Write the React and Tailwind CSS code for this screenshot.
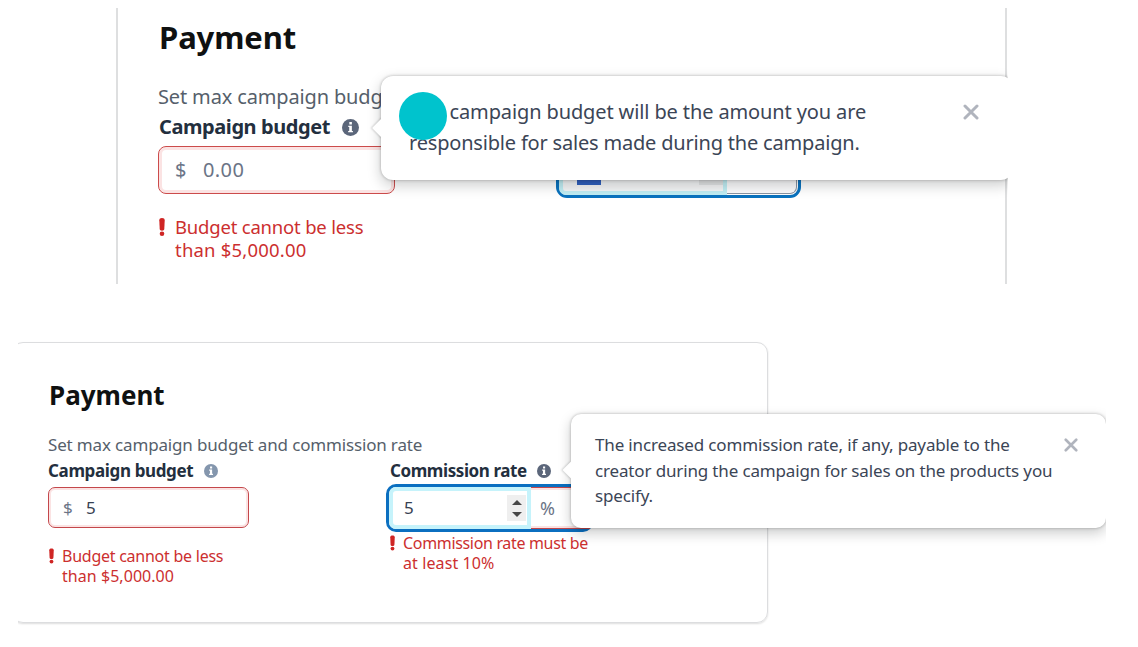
import React from 'react';

const InfoIcon = ({ className }) => (
    <svg viewBox="0 0 16 16" className={className}>
        <circle cx="8" cy="8" r="8" fill="currentColor" />
        <path d="M6.9 2.900h2.400v2.200H6.900zM5.900 6.300h3.400v4.900h1v1.300H5.800v-1.300h1V7.600h-.9z" fill="#fff" />
    </svg>
);

const AlertMark = ({ className }) => (
    <svg viewBox="0 0 6 18" className={className}>
        <path d="M.3 2.200C.3.800 1.300 0 3 0s2.700.8 2.700 2.200L5.300 11c-.1 1.100-1 1.700-2.300 1.700S.8 12.100.7 11z" fill="#cf2524" />
        <circle cx="3" cy="15.700" r="2.300" fill="#cf2524" />
    </svg>
);

const CloseIcon = ({ className }) => (
    <svg viewBox="0 0 16 16" className={className}>
        <path d="M2 2l12 12M14 2L2 14" stroke="#b0b4bd" strokeWidth="3" strokeLinecap="round" />
    </svg>
);

// Native number input style up/down arrows
const Stepper = () => (
    <div className="flex h-[26px] w-[19px] flex-col items-center justify-center gap-[7px] bg-[#efefef]">
        <svg viewBox="0 0 10 5" className="h-[5px] w-[10px]"><path d="M0 5L5 0l5 5z" fill="#484848" /></svg>
        <svg viewBox="0 0 10 5" className="h-[5px] w-[10px]"><path d="M0 0l5 5 5-5z" fill="#484848" /></svg>
    </div>
);

const BudgetPanel = () => (
    <section className="relative ml-[116px] h-[276px] w-[892px] overflow-hidden">
        <div className="h-full w-[891px] border-x-2 border-[#dedfe0] pt-[9px] pl-[40px]">
            <h2 className="pl-px text-[31px] leading-[40px] font-bold tracking-[-0.1px] text-[#0f1111]">Payment</h2>
            <p className="mt-[25px] text-[20px] leading-[30px] tracking-[-0.15px] text-[#565f6b]">Set max campaign budget and</p>
            <div className="flex items-center">
                <span className="pl-px text-[20px] leading-[30px] font-bold tracking-[-0.42px] text-[#232f3e]">Campaign budget</span>
                <InfoIcon className="ml-[12px] h-[17px] w-[17px] text-[#5b667a]" />
            </div>
            <div className="mt-[4px] flex items-start">
                <div className="flex h-12 w-[237px] items-center rounded-[8px] border border-[#cc4b4b] pl-4 text-[20px] tracking-[0.4px] text-[#6b7486] shadow-[inset_0_0_0_3px_#fbe3e3]">
                    <span className="w-[28px]">$</span>
                    <span>0.00</span>
                </div>
                <div className="mt-[-4px] ml-[161px] flex h-[56px] w-[245px] rounded-[11px] border-3 border-[#0972be]">
                    <div className="flex w-[168px] items-end rounded-l-[7px] border-4 border-[#c0edf3] bg-[#f4f5f6] pb-[6px] pl-[14px]">
                        <div className="h-[24px] w-[24px] bg-[#2f5fbe]" />
                        <div className="ml-auto h-[24px] w-[24px] bg-[#e2e3e4]" />
                    </div>
                    <div className="mr-px mb-px flex-1 rounded-r-[7px] border border-l-0 border-[#8a94a3] bg-[#fbfbfc]" />
                </div>
            </div>
            <div className="mt-[17px] flex text-[18.5px] leading-[23px] tracking-[-0.2px] text-[#cc2f2f]">
                <AlertMark className="mt-[3px] mr-[10px] ml-px h-[18px] w-[6px]" />
                <p>Budget cannot be less<br /><span className="tracking-[0.2px]">than $5,000.00</span></p>
            </div>
        </div>

        <div className="absolute top-[68px] left-[265px] flex h-[104px] w-[632px] items-start rounded-[12px] bg-white pt-[21px] pl-[28px] shadow-[0_0_3px_rgba(15,17,17,0.3),0_5px_14px_rgba(15,17,17,0.22)]">
            <div className="absolute top-[45px] left-[-6px] h-[14px] w-[14px] rotate-45 bg-white shadow-[-1px_1px_2px_rgba(15,17,17,0.16)]" />
            <div className="absolute top-[38px] left-0 h-[26px] w-[16px] bg-white" />
            <p className="w-[554px] text-[20px] leading-[30.5px] tracking-[-0.12px] text-[#3b4556]">
                <span className="inline-block w-[40.5px]" />campaign budget will be the amount you are<br />
                <span className="tracking-[-0.19px]">responsible for sales made during the campaign.</span>
            </p>
            <CloseIcon className="mt-[7px] h-[16px] w-[16px]" />
            <div className="absolute top-[15.5px] left-[18px] h-[48px] w-[48px] rounded-full bg-[#00c3cd]" />
        </div>
    </section>
);

const CommissionPanel = () => (
    <section className="relative mt-[48px] ml-[18px] h-[315px] w-[1088px] overflow-hidden">
        <div className="mt-[10px] ml-[-6px] h-[281px] w-[756px] rounded-[11px] border border-[#dcdddf] pt-[36px] pl-[35px] shadow-[0_1px_2px_rgba(15,17,17,0.14)]">
            <h2 className="pl-px text-[26px] leading-[32px] font-bold tracking-[0px] text-[#0f1111]">Payment</h2>
            <p className="mt-[21px] text-[17px] leading-[26px] tracking-[-0.16px] text-[#565f6b]">Set max campaign budget and commission rate</p>
            <div className="flex">
                <div className="w-[338px]">
                    <div className="flex items-center">
                        <span className="text-[17px] leading-[26px] font-bold tracking-[-0.36px] text-[#232f3e]">Campaign budget</span>
                        <InfoIcon className="mb-px ml-[11px] h-[14px] w-[14px] text-[#8496ad]" />
                    </div>
                    <div className="mt-[3px] flex h-[41px] w-[201px] items-center rounded-[7px] border border-[#c4474b] pl-[14px] text-[17px] text-[#6b7486] shadow-[inset_0_0_0_2px_#fbe3e3]">
                        <span className="w-[23px]">$</span>
                        <span className="text-[#364152]">5</span>
                    </div>
                    <div className="mt-[18px] flex text-[16px] leading-5 tracking-[-0.25px] text-[#cc2f2f]">
                        <AlertMark className="mt-[2px] mr-[8px] ml-px h-[16px] w-[5px]" />
                        <p>Budget cannot be less<br /><span className="tracking-[0.05px]">than $5,000.00</span></p>
                    </div>
                </div>
                <div>
                    <div className="flex items-center pl-[4px]">
                        <span className="text-[17px] leading-[26px] font-bold tracking-[-0.42px] text-[#232f3e]">Commission rate</span>
                        <InfoIcon className="mb-px ml-[10px] h-[14px] w-[14px] text-[#5b667a]" />
                    </div>
                    <div className="flex h-[48px] w-[207px] rounded-[10px] border-3 border-[#0b6fc0] text-[17px]">
                        <div className="flex w-[142px] items-center justify-between rounded-l-[7px] border-4 border-[#c6f3fb] pr-px pl-[11px] text-[#364152]">
                            <span>5</span>
                            <Stepper />
                        </div>
                        <div className="flex flex-1 items-center border-y border-[#c4474b] pl-[9px] text-[18px] text-[#6b7486] shadow-[inset_0_2px_0_#fbe3e3,inset_0_-2px_0_#fbe3e3]">%</div>
                    </div>
                    <div className="mt-px flex pl-[4px] text-[16px] leading-5 tracking-[-0.33px] text-[#cc2f2f]">
                        <AlertMark className="mt-[2px] mr-[8px] h-[16px] w-[5px]" />
                        <p>Commission rate must be<br /><span className="tracking-[0.1px]">at least 10%</span></p>
                    </div>
                </div>
            </div>
        </div>

        <div className="absolute top-[82px] left-[553px] flex h-[114px] w-[535px] items-start rounded-[10px] bg-white pt-[18px] pl-[24px] shadow-[0_0_3px_rgba(15,17,17,0.3),0_5px_13px_rgba(15,17,17,0.22)]">
            <div className="absolute top-[50px] left-[-6px] h-[12px] w-[12px] rotate-45 bg-white shadow-[-1px_1px_2px_rgba(15,17,17,0.16)]" />
            <div className="absolute top-[44px] left-0 h-[24px] w-[14px] bg-white" />
            <p className="w-[469px] text-[17px] leading-[25.5px] tracking-[-0.15px] text-[#3b4556]">
                The increased commission rate, if any, payable to the<br />
                creator during the campaign for sales on the products you<br />
                specify.
            </p>
            <CloseIcon className="mt-[6px] h-[14px] w-[14px]" />
        </div>
    </section>
);

export default function App() {
    return (
        <div className="h-[647px] w-[1138px] overflow-hidden bg-white pt-2 font-['Noto_Sans',sans-serif] whitespace-nowrap">
            <BudgetPanel />
            <CommissionPanel />
        </div>
    );
}
